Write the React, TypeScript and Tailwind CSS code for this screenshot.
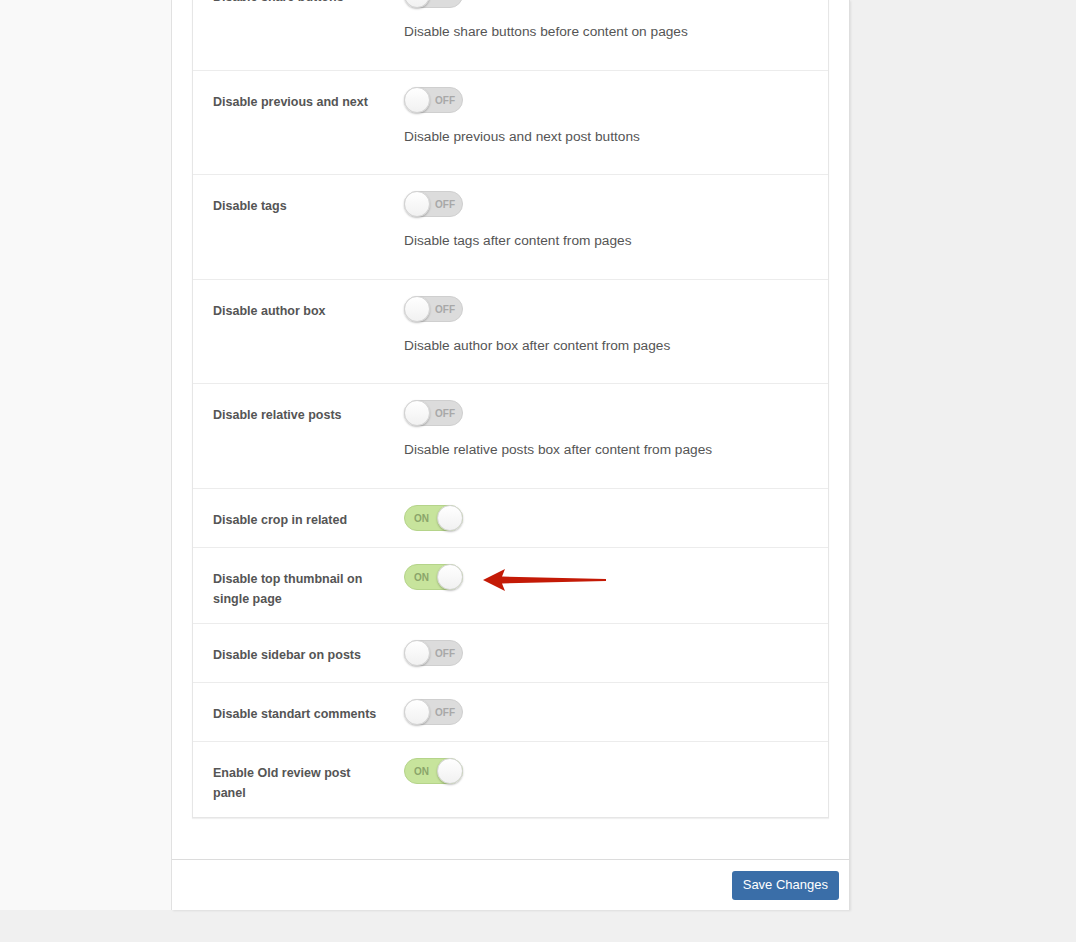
import React from 'react';

interface Setting {
  label: string;
  on: boolean;
  description?: string;
}

const settings: Setting[] = [
  { label: 'Disable share buttons', on: false, description: 'Disable share buttons before content on pages' },
  { label: 'Disable previous and next', on: false, description: 'Disable previous and next post buttons' },
  { label: 'Disable tags', on: false, description: 'Disable tags after content from pages' },
  { label: 'Disable author box', on: false, description: 'Disable author box after content from pages' },
  { label: 'Disable relative posts', on: false, description: 'Disable relative posts box after content from pages' },
  { label: 'Disable crop in related', on: true },
  { label: 'Disable top thumbnail on single page', on: true },
  { label: 'Disable sidebar on posts', on: false },
  { label: 'Disable standart comments', on: false },
  { label: 'Enable Old review post panel', on: true },
];

function Toggle({ on }: { on: boolean }) {
  return (
    <div
      className={
        'relative h-[26px] w-[59px] rounded-full border ' +
        (on ? 'bg-[#c7e49c] border-[#b5d48a]' : 'bg-[#dcdcdc] border-[#cfcfcf]')
      }
    >
      <span
        className={
          'absolute top-1/2 -translate-y-1/2 text-[10px] font-bold ' +
          (on ? 'left-[9px] text-[#8ba56a]' : 'right-[7px] text-[#a8a8a8]')
        }
      >
        {on ? 'ON' : 'OFF'}
      </span>
      <span
        className={
          'absolute top-[-1px] h-[26px] w-[26px] rounded-full border border-[#d4d4d4] bg-gradient-to-b from-white to-[#f1f1f1] shadow-[0_1px_2px_rgba(0,0,0,0.25)] ' +
          (on ? 'right-[-1px]' : 'left-[-1px]')
        }
      />
    </div>
  );
}

export default function App() {
  return (
    <div className="relative h-[942px] w-[1076px] overflow-hidden bg-[#f0f0f0] font-['Liberation_Sans',Arial,sans-serif]">
      <div className="flex h-[910px]">
        <div className="w-[172px] bg-[#f9f9f9] border-r border-[#e2e2e2]" />
        <div className="flex w-[678px] flex-col bg-white border-r border-[#dedede] shadow-[1px_1px_2px_rgba(0,0,0,0.08)]">
          <div className="flex-1 px-5">
            <div className="-mt-[35px] border border-[#e6e6e6] shadow-[0_1px_1px_rgba(0,0,0,0.06)]">
              {settings.map((s, i) => (
                <div
                  key={s.label}
                  className={'flex px-[20px] pt-4 pb-4 ' + (i > 0 ? 'border-t border-[#ececec]' : '')}
                >
                  <div className="-mb-[2px] w-[191px] shrink-0 pr-5 pt-[5px] text-[12.5px] font-bold leading-[20px] text-[#555]">
                    {s.label}
                  </div>
                  <div className="flex flex-col">
                    <Toggle on={s.on} />
                    {s.description && (
                      <p className="mt-[14px] mb-[11.5px] text-[13.7px] leading-[20px] text-[#555]">{s.description}</p>
                    )}
                  </div>
                </div>
              ))}
            </div>
          </div>
          <div className="flex h-[51px] items-center justify-end border-t border-[#dcdcdc] px-[10px]">
            <button className="h-[29px] rounded-[3px] bg-[#3a6ea8] px-[11px] text-[13px] text-white">
              Save Changes
            </button>
          </div>
        </div>
      </div>

      {/* red arrow pointing at the thumbnail toggle */}
      <svg className="absolute left-[480px] top-[566px]" width="130" height="28" viewBox="0 0 130 28">
        <path d="M3 14 L25 3 L22 10.5 L126 13 L126 15 L22 17.5 L25 25 Z" fill="#c41a06" />
      </svg>
    </div>
  );
}
